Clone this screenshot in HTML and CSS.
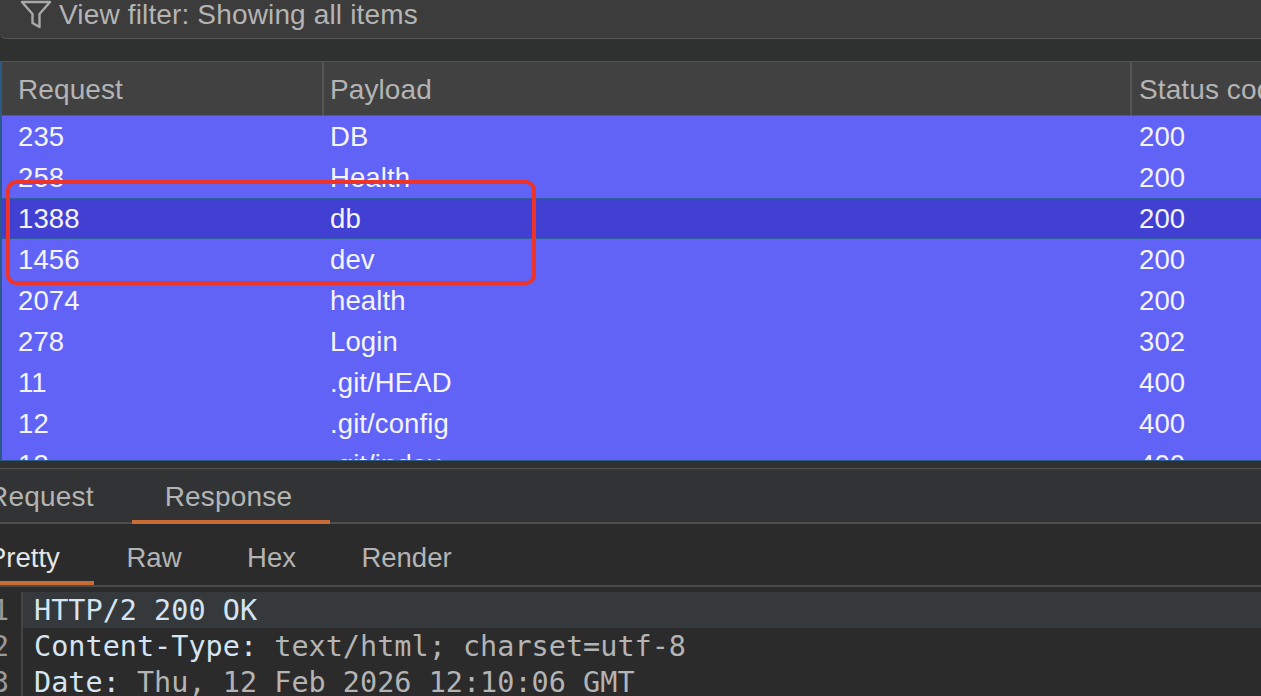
FILE: index.html
```html
<!DOCTYPE html>
<html lang="en">
<head>
    <meta charset="UTF-8">
    <title>Intruder results</title>
    <link rel="stylesheet" href="styles.css">
</head>
<body>
    <div class="filter-bar">
        <svg class="filter-icon" width="32" height="30" viewBox="0 0 32 30" fill="none" stroke="#a9a9a9" stroke-width="2.4" stroke-linejoin="round">
            <path d="M2 2H30L19.5 14V27L12.5 23V14Z"/>
        </svg>
        <span>View filter: Showing all items</span>
    </div>

    <div class="results">
        <div class="row head">
            <div class="col-req">Request</div>
            <div class="col-pay">Payload</div>
            <div class="col-status">Status code</div>
        </div>
        <div class="rows">
            <div class="row"><div class="col-req">235</div><div class="col-pay">DB</div><div class="col-status">200</div></div>
            <div class="row"><div class="col-req">258</div><div class="col-pay">Health</div><div class="col-status">200</div></div>
            <div class="row selected"><div class="col-req">1388</div><div class="col-pay">db</div><div class="col-status">200</div></div>
            <div class="row"><div class="col-req">1456</div><div class="col-pay">dev</div><div class="col-status">200</div></div>
            <div class="row"><div class="col-req">2074</div><div class="col-pay">health</div><div class="col-status">200</div></div>
            <div class="row"><div class="col-req">278</div><div class="col-pay">Login</div><div class="col-status">302</div></div>
            <div class="row"><div class="col-req">11</div><div class="col-pay">.git/HEAD</div><div class="col-status">400</div></div>
            <div class="row"><div class="col-req">12</div><div class="col-pay">.git/config</div><div class="col-status">400</div></div>
            <div class="row"><div class="col-req">13</div><div class="col-pay">.git/index</div><div class="col-status">400</div></div>
        </div>
        <div class="highlight"></div>
    </div>

    <div class="tabs">
        <div class="tab tab-request">Request</div>
        <div class="tab active">Response</div>
    </div>

    <div class="subtabs">
        <div class="subtab subtab-pretty active">Pretty</div>
        <div class="subtab">Raw</div>
        <div class="subtab">Hex</div>
        <div class="subtab">Render</div>
    </div>

    <div class="code">
        <div class="line current"><span class="num">1</span><span class="text"><span class="key">HTTP/2 200 OK</span></span></div>
        <div class="line"><span class="num">2</span><span class="text"><span class="key">Content-Type:</span> text/html; charset=utf-8</span></div>
        <div class="line"><span class="num">3</span><span class="text"><span class="key">Date:</span> Thu, 12 Feb 2026 12:10:06 GMT</span></div>
    </div>
</body>
</html>
```

FILE: styles.css
```css
html, body {
    height: 100%;
}

body {
    margin: 0;
    display: flex;
    flex-direction: column;
    background: #2f3030;
    overflow: hidden;
    font-family: "Liberation Sans", Arial, sans-serif;
    font-size: 28px;
    color: #b4b4b4;
}

/* top filter */
.filter-bar {
    flex: none;
    height: 38px;
    margin-bottom: 22px;
    display: flex;
    align-items: flex-start;
    gap: 7px;
    padding-left: 20px;
    background: #3c3c3c;
    border-bottom: 1px solid #565656;
    border-bottom-left-radius: 6px;
    line-height: 30px;
    letter-spacing: 0.15px;
}

.filter-icon {
    flex: none;
}

/* results table */
.results {
    flex: none;
    position: relative;
    height: 398px;
    overflow: hidden;
    border-top: 1px solid #2c5a86;
    border-left: 2px solid #2c5a86;
    border-bottom: 1px solid #2c5a86;
}

.row {
    display: flex;
    height: 41px;
    line-height: 41px;
    font-size: 27.5px;
    letter-spacing: 0.1px;
    color: #f4f4ff;
    box-sizing: border-box;
}

.rows {
    background: #6063f5;
}

.head {
    height: 54px;
    line-height: 55px;
    font-size: 28px;
    background: #414141;
    color: #b4b4b4;
    border-bottom: 1px solid #5b5b6b;
}

.selected {
    line-height: 39px;
    background: #4240d2;
    border-top: 1px solid #2f5f9f;
    border-bottom: 1px solid #2f5f9f;
}

.col-req {
    width: 322px;
    padding-left: 16px;
    box-sizing: border-box;
    flex: none;
}

.col-pay {
    width: 808px;
    padding-left: 6px;
    box-sizing: border-box;
    flex: none;
}

.col-status {
    padding-left: 7px;
    white-space: nowrap;
}

.head .col-pay,
.head .col-status {
    border-left: 2px solid #565656;
    margin-left: -2px;
}

.head .col-pay {
    width: 810px;
}

.highlight {
    position: absolute;
    left: 4px;
    top: 118px;
    width: 522px;
    height: 97px;
    border: 4px solid #ef3427;
    border-radius: 10px;
}

/* request / response tabs */
.tabs {
    flex: none;
    height: 56px;
    margin-top: 7px;
    display: flex;
    background: #323334;
    border-top: 1px solid #545250;
    border-bottom: 2px solid #4e4e4e;
    box-sizing: border-box;
}

.tab {
    width: 198px;
    text-align: center;
    line-height: 56px;
    box-sizing: border-box;
    letter-spacing: 0.2px;
}

.tab-request {
    width: 132px;
    margin-left: -6px;
    text-align: left;
    text-indent: -6px;
}

.tabs .active {
    margin-left: 6px;
    padding-right: 5px;
    border-bottom: 4px solid #c96b35;
    height: 55px;
}

.subtabs {
    flex: none;
    height: 63px;
    display: flex;
    font-size: 27.5px;
    background: #2b2b2b;
    border-bottom: 2px solid #4a4a4a;
    box-sizing: border-box;
}

.subtab {
    padding: 0 33px 0 32.5px;
    line-height: 68px;
    box-sizing: border-box;
}

.subtab-pretty {
    width: 94px;
    padding: 0;
    text-indent: -12px;
    white-space: nowrap;
    overflow: hidden;
    color: #e6e6e6;
    border-bottom: 4px solid #c96b35;
    height: 61px;
}

/* response body */
.code {
    flex: 1;
    background: #2b2b2b;
    font-family: "DejaVu Sans Mono", "Liberation Mono", monospace;
    font-size: 28.5px;
    line-height: 38px;
    padding-top: 5px;
}

.line {
    display: flex;
    height: 36px;
    white-space: nowrap;
}

.num {
    width: 29px;
    margin-left: -8px;
    flex: none;
    color: #9a9a9a;
    border-right: 2px solid #444;
}

.text {
    flex: 1;
    padding-left: 11px;
    color: #b4b4b4;
}

.current .text {
    background: #36393b;
}

.key {
    color: #d5e4f2;
}
```
